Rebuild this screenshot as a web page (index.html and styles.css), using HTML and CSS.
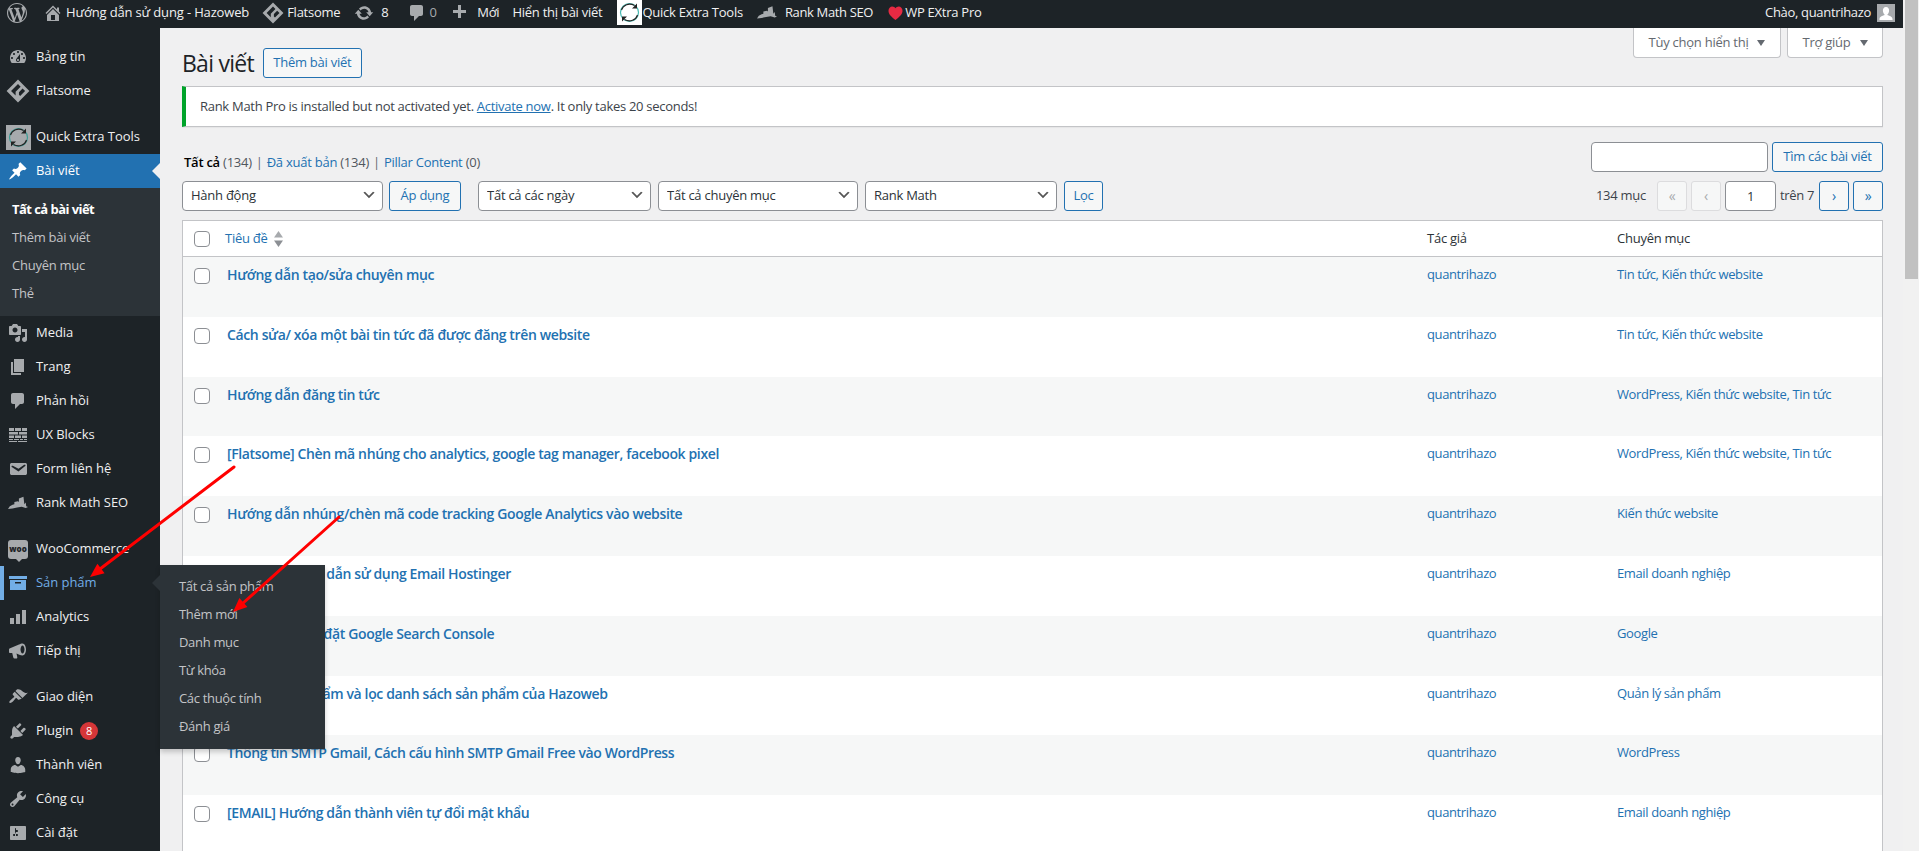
FILE: index.html
```html
<!DOCTYPE html>
<html lang="vi">
<head>
<meta charset="utf-8">
<title>Bài viết</title>
<link rel="stylesheet" href="styles.css">
</head>
<body>
<div class="viewport">
  <header class="adminbar">
    <div class="ab-left">
      <svg class="ab-wp" viewBox="0 0 20 20"><path d="M20 10c0-5.51-4.49-10-10-10C4.48 0 0 4.49 0 10c0 5.52 4.48 10 10 10 5.51 0 10-4.48 10-10zM7.78 15.37L4.37 6.22c.55-.02 1.17-.08 1.17-.08.5-.06.44-1.13-.06-1.11 0 0-1.45.11-2.37.11-.18 0-.37 0-.58-.01C4.12 2.69 6.87 1.11 10 1.11c2.33 0 4.45.87 6.05 2.34-.68-.11-1.65.39-1.65 1.58 0 .74.45 1.36.9 2.1.35.61.55 1.36.55 2.46 0 1.49-1.4 5-1.4 5l-3.03-8.37c.54-.02.82-.17.82-.17.5-.05.44-1.25-.06-1.22 0 0-1.44.12-2.38.12-.87 0-2.33-.12-2.33-.12-.5-.03-.56 1.2-.06 1.22l.92.08 1.26 3.41zM17.41 10c.24-.64.74-1.87.43-4.25.7 1.29 1.05 2.71 1.05 4.25 0 3.29-1.73 6.24-4.4 7.78.97-2.59 1.94-5.2 2.92-7.78zM6.1 18.09C3.12 16.65 1.11 13.53 1.11 10c0-1.3.23-2.48.72-3.59C3.25 10.3 4.67 14.2 6.1 18.09zm4.03-6.63l2.58 6.98c-.86.29-1.76.45-2.71.45-.79 0-1.57-.11-2.29-.33.81-2.38 1.62-4.74 2.42-7.1z"/></svg>
      <span class="ab-item ab-site"><svg class="ab-icon" viewBox="0 0 20 20"><path d="M16 8.5l1.53 1.53-1.06 1.06L10 4.62l-6.47 6.47-1.06-1.06L10 2.5l4 4v-2h2v4zm-6-2.46l6 5.99V18H4v-5.97zM12 17v-5H8v5h4z"/></svg>Hướng dẫn sử dụng - Hazoweb</span>
      <span class="ab-item ab-flatsome"><svg class="ab-icon ab-fs" viewBox="0 0 20 20"><path d="M10 .5l9.5 9.5-9.5 9.5L.5 10zM10 4.2L4.2 10 8 13.8V10.6l4.2-4.2zM13.8 8l-3 3v2.2l1 1L15.9 10z" fill-rule="evenodd"/></svg>Flatsome</span>
      <span class="ab-item ab-upd"><svg class="ab-icon" viewBox="0 0 20 20"><path d="M10.2 3.28c3.53 0 6.43 2.61 6.92 6h2.08l-3.5 4-3.5-4h2.32c-.45-1.97-2.21-3.45-4.32-3.45-1.45 0-2.73.71-3.54 1.78L4.95 5.66C6.23 4.2 8.11 3.28 10.2 3.28zm-.4 13.44c-3.52 0-6.43-2.61-6.92-6H.8l3.5-4c1.17 1.33 2.33 2.67 3.5 4H5.48c.45 1.97 2.21 3.45 4.32 3.45 1.45 0 2.73-.71 3.54-1.78l1.71 1.95c-1.28 1.46-3.15 2.38-5.25 2.38z"/></svg>8</span>
      <span class="ab-item ab-com"><svg class="ab-icon" viewBox="0 0 20 20"><path d="M5 2h9c1.1 0 2 .9 2 2v7c0 1.1-.9 2-2 2h-2l-5 5v-5H5c-1.1 0-2-.9-2-2V4c0-1.1.9-2 2-2z"/></svg><span class="ab-dim">0</span></span>
      <span class="ab-item ab-new"><svg class="ab-icon" viewBox="0 0 20 20"><path d="M17 7v3h-5v5H9v-5H4V7h5V2h3v5h5z"/></svg>Mới</span>
      <span class="ab-item ab-view">Hiển thị bài viết</span>
      <span class="ab-item ab-quick"><span class="qet-box"><svg class="qet" viewBox="0 0 25 25"><circle class="qet-ring" cx="12.5" cy="12.5" r="9"/><path class="qet-arc" d="M4.5 10C6 5 12 2.500 17.500 5.500M20.500 15C19 20 13 22.500 7.500 19.500"/><path class="qet-tip" d="M20 3.500V8.500H15zM5 21.500V16.500H10z"/></svg></span>Quick Extra Tools</span>
      <span class="ab-item ab-rank"><svg class="ab-icon ab-rm" viewBox="0 0 22 14"><path d="M0 13.500l2-3 3-1.500 2-.5V6l4-1 1 1V2l5-2 1 8.500 1.500-2 .5 4 2 1-2.500 1L15 11l-5 1-5 1z"/></svg>Rank Math SEO</span>
      <span class="ab-item ab-heart"><svg class="ab-icon" viewBox="0 0 16 15"><path d="M8 15C3 11 .5 8.500.5 5 .5 2.300 2.500.5 4.500.5 6 .5 7.300 1.300 8 2.500 8.700 1.300 10 .5 11.500.5c2 0 4 1.800 4 4.500 0 3.500-2.500 6-7.500 10z" fill="#e72a43"/></svg>WP EXtra Pro</span>
    </div>
    <div class="ab-right">Chào, quantrihazo<span class="avatar"><svg viewBox="0 0 18 18"><path d="M9 3c2.200 0 3.300 1.800 3.100 4-.2 1.900-1.300 3.300-1.900 3.900 2.600.9 5.300 1.700 5.300 4.100v1H2.500v-1c0-2.400 2.700-3.200 5.300-4.100C7.200 10.300 6.100 8.900 5.900 7 5.700 4.800 6.800 3 9 3z" fill="#fff"/></svg></span></div>
  </header>

  <div class="shell">
    <nav class="sidebar">
      <ul class="menu">
        <li class="mi"><svg class="mi-icon" viewBox="0 0 20 20"><path d="M3.76 16h12.48c1.100-1.370 1.760-3.110 1.760-5 0-4.420-3.580-8-8-8s-8 3.580-8 8c0 1.890.660 3.630 1.760 5zM10 4c.55 0 1 .45 1 1s-.45 1-1 1-1-.45-1-1 .45-1 1-1zM6 6c.55 0 1 .45 1 1s-.45 1-1 1-1-.45-1-1 .45-1 1-1zm8 0c.55 0 1 .45 1 1s-.45 1-1 1-1-.45-1-1 .45-1 1-1zm-5.370 5.550L12 7v6c0 1.100-.9 2-2 2s-2-.9-2-2c0-.57.24-1.080.63-1.450zM4 10c.55 0 1 .45 1 1s-.45 1-1 1-1-.45-1-1 .45-1 1-1zm12 0c.55 0 1 .45 1 1s-.45 1-1 1-1-.45-1-1 .45-1 1-1zm-5 3c0-.55-.45-1-1-1s-1 .45-1 1 .45 1 1 1 1-.45 1-1z"/></svg>Bảng tin</li>
        <li class="mi"><svg class="mi-icon mi-fs" viewBox="0 0 20 20"><path d="M10 .5l9.500 9.500-9.500 9.500L.5 10zM10 4.200L4.200 10 8 13.800V10.600l4.200-4.200zM13.800 8l-3 3v2.200l1 1L15.900 10z" fill-rule="evenodd"/></svg>Flatsome</li>
        <li class="sep"></li>
        <li class="mi mi-qet"><span class="qet-box qet-side"><svg class="qet" viewBox="0 0 25 25"><circle class="qet-ring" cx="12.500" cy="12.500" r="9"/><path class="qet-arc" d="M4.500 10C6 5 12 2.500 17.500 5.500M20.500 15C19 20 13 22.500 7.500 19.500"/><path class="qet-tip" d="M20 3.500V8.500H15zM5 21.500V16.500H10z"/></svg></span>Quick Extra Tools</li>
        <li class="mi mi-current"><svg class="mi-icon" viewBox="0 0 20 20"><path d="M10.440 3.020l1.820-1.820 6.360 6.350-1.830 1.820c-1.050-.68-2.480-.57-3.410.36l-.75.75c-.92.93-1.040 2.350-.35 3.410l-1.830 1.820-2.410-2.410-2.800 2.790c-.42.42-3.380 2.710-3.800 2.290s1.860-3.390 2.280-3.810l2.790-2.790L4.100 9.360l1.830-1.820c1.050.69 2.480.57 3.400-.36l.75-.75c.93-.92 1.050-2.350.36-3.410z"/></svg>Bài viết</li>
        <li>
          <ul class="submenu">
            <li class="sub-current">Tất cả bài viết</li>
            <li>Thêm bài viết</li>
            <li>Chuyên mục</li>
            <li>Thẻ</li>
          </ul>
        </li>
        <li class="mi"><svg class="mi-icon" viewBox="0 0 20 20"><path d="M13 11V4c0-.55-.45-1-1-1h-1.670L9 1H5L3.670 3H2c-.55 0-1 .45-1 1v7c0 .55.45 1 1 1h10c.55 0 1-.45 1-1zM7 4.500c1.380 0 2.500 1.120 2.500 2.500S8.380 9.500 7 9.500 4.500 8.380 4.500 7 5.620 4.500 7 4.500zM14 6h5v10.500c0 1.380-1.120 2.500-2.500 2.500S14 17.880 14 16.500s1.120-2.500 2.500-2.500c.17 0 .34.02.5.05V9h-3V6zm-4 8.050V13h2v3.500c0 1.380-1.120 2.500-2.500 2.500S7 17.880 7 16.500 8.120 14 9.500 14c.17 0 .34.02.5.05z"/></svg>Media</li>
        <li class="mi"><svg class="mi-icon" viewBox="0 0 20 20"><path d="M6 15V2h10v13H6zm-1 1h8v2H3V5h2v11z"/></svg>Trang</li>
        <li class="mi"><svg class="mi-icon" viewBox="0 0 20 20"><path d="M5 2h9c1.100 0 2 .9 2 2v7c0 1.100-.9 2-2 2h-2l-5 5v-5H5c-1.100 0-2-.9-2-2V4c0-1.100.9-2 2-2z"/></svg>Phản hồi</li>
        <li class="mi"><svg class="mi-icon" viewBox="0 0 20 20"><path d="M1 3h5v3H1zM7 3h6v3H7zM14 3h5v3h-5zM1 7h9v2.500H1zM11 7h8v2.500h-8zM1 10.500h5v2.500H1zM7 10.500h6V13H7zM14 10.500h5V13h-5zM1 14h4v1H1zM6 14h5v1H6zM12 14h3v1h-3zM16 14h3v1h-3zM1 16h8v1H1zM10 16h9v1h-9z"/></svg>UX Blocks</li>
        <li class="mi"><svg class="mi-icon" viewBox="0 0 20 20"><path d="M3.870 4h13.250C18.370 4 19 4.590 19 5.790v8.420c0 1.190-.63 1.790-1.880 1.790H3.870c-1.250 0-1.880-.6-1.880-1.790V5.790c0-1.200.63-1.790 1.880-1.790zm6.620 8.600l6.740-5.530c.24-.2.43-.66.13-1.070-.29-.41-.82-.42-1.170-.17l-5.700 3.860L4.800 6.830c-.35-.25-.88-.24-1.170.17-.3.41-.11.87.13 1.070z"/></svg>Form liên hệ</li>
        <li class="mi"><svg class="mi-icon" viewBox="0 0 22 14"><path d="M0 13.500l2-3 3-1.500 2-.5V6l4-1 1 1V2l5-2 1 8.500 1.500-2 .5 4 2 1-2.500 1L15 11l-5 1-5 1z"/></svg>Rank Math SEO</li>
        <li class="sep"></li>
        <li class="mi"><span class="woo"><span class="woo-text">woo</span></span>WooCommerce</li>
        <li class="mi mi-open">
          <svg class="mi-icon" viewBox="0 0 20 20"><path d="M1 3h18v3H1zM2 7h16v10H2zM7 9v1.500h6V9z" fill-rule="evenodd"/></svg>Sản phẩm
          <ul class="flyout">
            <li>Tất cả sản phẩm</li>
            <li>Thêm mới</li>
            <li>Danh mục</li>
            <li>Từ khóa</li>
            <li>Các thuộc tính</li>
            <li>Đánh giá</li>
          </ul>
        </li>
        <li class="mi"><svg class="mi-icon" viewBox="0 0 20 20"><path d="M2 11h4v6H2zM8 7h4v10H8zM14 3h4v14h-4z"/></svg>Analytics</li>
        <li class="mi"><svg class="mi-icon" viewBox="0 0 20 20"><path d="M1.500 7.500L11 3.500c1-.4 2.500-1 3.500-1 2 0 3.500 2.800 3.500 6s-1.500 6-3.500 6c-.9 0-2.200-.4-3.200-.8L8.500 12.500l.8 3.700c.1.700-.3 1.300-1 1.300H6.500c-.6 0-1-.3-1.200-.9L4.200 12 2 12c-.6 0-1-.5-1-1V8.500c0-.4.2-.8.500-1zM14.500 4.500c-1 0-2 1.800-2 4s1 4 2 4 2-1.800 2-4-1-4-2-4z" fill-rule="evenodd"/></svg>Tiếp thị</li>
        <li class="sep"></li>
        <li class="mi"><svg class="mi-icon" viewBox="0 0 20 20"><path d="M14.480 11.060L7.410 3.990l1.500-1.500c.5-.56 2.300-.47 3.510.32 1.210.8 1.430 1.280 2.910 2.100 1.180.64 2.450 1.260 4.450.85zm-.71.71L6.700 4.700 4.930 6.470c-.39.39-.39 1.020 0 1.410l1.060 1.060c.39.39.39 1.030 0 1.420-.6.6-1.430 1.110-2.210 1.690-.35.26-.7.53-1.010.84C1.430 13.710.96 15.120 1.540 15.780c.69.61 2.090.14 3.400-1.180.31-.31.58-.66.85-1.010.57-.78 1.080-1.610 1.690-2.210.39-.39 1.020-.39 1.410 0l1.060 1.060c.39.39 1.020.39 1.410 0z"/></svg>Giao diện</li>
        <li class="mi"><svg class="mi-icon" viewBox="0 0 20 20"><path d="M13.110 4.360L9.870 7.600 8 5.730l3.240-3.240c.35-.34 1.050-.2 1.560.32.52.51.66 1.210.31 1.550zm-8 1.770l.91-1.120 9.010 9.010-1.190.84c-.71.71-2.630 1.160-3.820 1.160H6.140L4.900 17.260c-.59.59-1.540.59-2.120 0-.59-.58-.59-1.530 0-2.120l1.240-1.240v-3.880c0-1.130.4-3.190 1.090-3.890zm7.260 3.970l3.240-3.240c.34-.35 1.040-.21 1.550.31.52.51.66 1.210.31 1.550l-3.240 3.250z"/></svg>Plugin<span class="badge">8</span></li>
        <li class="mi"><svg class="mi-icon" viewBox="0 0 20 20"><path d="M10 9.250c-2.270 0-2.730-3.440-2.730-3.440C7 4.020 7.820 2 9.970 2c2.160 0 2.980 2.020 2.710 3.810 0 0-.41 3.440-2.680 3.440zm0 2.570L12.720 10c2.390 0 4.520 2.330 4.520 4.530v2.490s-3.650 1.130-7.240 1.130c-3.650 0-7.240-1.130-7.240-1.130v-2.490c0-2.250 1.940-4.480 4.470-4.480z"/></svg>Thành viên</li>
        <li class="mi"><svg class="mi-icon" viewBox="0 0 20 20"><path d="M16.680 9.770c-1.340 1.340-3.300 1.670-4.950.99l-5.410 6.520c-.99.99-2.590.99-3.580 0s-.99-2.590 0-3.570l6.520-5.420c-.68-1.650-.35-3.610.99-4.950 1.280-1.280 3.120-1.620 4.720-1.060l-2.890 2.890 2.820 2.820 2.860-2.870c.53 1.580.18 3.390-1.080 4.650zM3.810 16.210c.4.39 1.040.39 1.430 0 .4-.4.4-1.040 0-1.430-.39-.4-1.030-.4-1.430 0-.39.39-.39 1.030 0 1.430z"/></svg>Công cụ</li>
        <li class="mi"><svg class="mi-icon" viewBox="0 0 20 20"><path d="M18 16V4c0-.55-.45-1-1-1H3c-.55 0-1 .45-1 1v12c0 .55.45 1 1 1h14c.55 0 1-.45 1-1zM8 11h1c.55 0 1 .45 1 1s-.45 1-1 1H8v1.500c0 .28-.22.5-.5.5s-.5-.22-.5-.5V13H6c-.55 0-1-.45-1-1s.45-1 1-1h1V5.500c0-.28.22-.5.5-.5s.5.22.5.5V7h1c.55 0 1 .45 1 1s-.45 1-1 1h-1v5.500c0 .28-.22.5-.5.5s-.5-.22-.5-.5V9z"/></svg>Cài đặt</li>
      </ul>
    </nav>

    <main class="main">
      <div class="meta-links">
        <button class="meta-tab meta-options">Tùy chọn hiển thị<span class="caret"></span></button>
        <button class="meta-tab meta-help">Trợ giúp<span class="caret"></span></button>
      </div>
      <div class="title-row">
        <h1 class="page-title">Bài viết</h1>
        <a class="btn btn-add">Thêm bài viết</a>
      </div>
      <div class="notice">Rank Math Pro is installed but not activated yet. <a class="notice-link">Activate now</a>. It only takes 20 seconds!</div>

      <div class="views-row">
        <ul class="views">
          <li><b>Tất cả</b> <span class="count">(134)</span></li>
          <li class="bar">|</li>
          <li><a>Đã xuất bản</a> <span class="count">(134)</span></li>
          <li class="bar">|</li>
          <li><a>Pillar Content</a> <span class="count">(0)</span></li>
        </ul>
        <div class="search">
          <input class="search-input" type="text" aria-label="Tìm">
          <a class="btn btn-search">Tìm các bài viết</a>
        </div>
      </div>

      <div class="filter-row">
        <select class="sel sel-action"><option>Hành động</option></select>
        <a class="btn btn-apply">Áp dụng</a>
        <select class="sel sel-date"><option>Tất cả các ngày</option></select>
        <select class="sel sel-cat"><option>Tất cả chuyên mục</option></select>
        <select class="sel sel-rank"><option>Rank Math</option></select>
        <a class="btn btn-filter">Lọc</a>
        <div class="pager">
          <span class="pager-count">134 mục</span>
          <span class="pg pg-off pg-first">«</span>
          <span class="pg pg-off">‹</span>
          <input class="pg-input" type="text" value="1" aria-label="Trang">
          <span class="pg-total">trên 7</span>
          <a class="pg pg-next">›</a>
          <a class="pg">»</a>
        </div>
      </div>

      <table class="posts">
        <colgroup><col class="c-check"><col class="c-title"><col class="c-author"><col class="c-cat"></colgroup>
        <thead>
          <tr>
            <th class="cell-check"><span class="check"></span></th>
            <th><a class="sort">Tiêu đề<svg class="sort-icon" viewBox="0 0 9 16"><path d="M4.500 0L9 6.500H0z" fill="#a7aaad"/><path d="M4.500 16L0 9.500h9z" fill="#8c8f94"/></svg></a></th>
            <th>Tác giả</th>
            <th>Chuyên mục</th>
          </tr>
        </thead>
        <tbody>
          <tr><td class="cell-check"><span class="check"></span></td><td><a class="post-title">Hướng dẫn tạo/sửa chuyên mục</a></td><td><a>quantrihazo</a></td><td><a>Tin tức, Kiến thức website</a></td></tr>
          <tr><td class="cell-check"><span class="check"></span></td><td><a class="post-title">Cách sửa/ xóa một bài tin tức đã được đăng trên website</a></td><td><a>quantrihazo</a></td><td><a>Tin tức, Kiến thức website</a></td></tr>
          <tr><td class="cell-check"><span class="check"></span></td><td><a class="post-title">Hướng dẫn đăng tin tức</a></td><td><a>quantrihazo</a></td><td><a>WordPress, Kiến thức website, Tin tức</a></td></tr>
          <tr><td class="cell-check"><span class="check"></span></td><td><a class="post-title">[Flatsome] Chèn mã nhúng cho analytics, google tag manager, facebook pixel</a></td><td><a>quantrihazo</a></td><td><a>WordPress, Kiến thức website, Tin tức</a></td></tr>
          <tr><td class="cell-check"><span class="check"></span></td><td><a class="post-title">Hướng dẫn nhúng/chèn mã code tracking Google Analytics vào website</a></td><td><a>quantrihazo</a></td><td><a>Kiến thức website</a></td></tr>
          <tr><td class="cell-check"><span class="check"></span></td><td><a class="post-title">[EMAIL] Hướng dẫn sử dụng Email Hostinger</a></td><td><a>quantrihazo</a></td><td><a>Email doanh nghiệp</a></td></tr>
          <tr><td class="cell-check"><span class="check"></span></td><td><a class="post-title">Hướng dẫn cài đặt Google Search Console</a></td><td><a>quantrihazo</a></td><td><a>Google</a></td></tr>
          <tr><td class="cell-check"><span class="check"></span></td><td><a class="post-title">Quản lý sản phẩm và lọc danh sách sản phẩm của Hazoweb</a></td><td><a>quantrihazo</a></td><td><a>Quản lý sản phẩm</a></td></tr>
          <tr><td class="cell-check"><span class="check"></span></td><td><a class="post-title">Thông tin SMTP Gmail, Cách cấu hình SMTP Gmail Free vào WordPress</a></td><td><a>quantrihazo</a></td><td><a>WordPress</a></td></tr>
          <tr><td class="cell-check"><span class="check"></span></td><td><a class="post-title">[EMAIL] Hướng dẫn thành viên tự đổi mật khẩu</a></td><td><a>quantrihazo</a></td><td><a>Email doanh nghiệp</a></td></tr>
        </tbody>
      </table>
    </main>
  </div>
</div>
<div class="scrollbar"><div class="thumb"></div></div>

<svg class="annotations" viewBox="0 0 1919 851" aria-hidden="true">
  <path class="arrow-line" d="M234 467L100 569"/>
  <path class="arrow-head" d="M90 577L97.400 563.700 104.600 573.300z"/>
  <path class="arrow-line" d="M339 517L242 604"/>
  <path class="arrow-head" d="M233 612L239.400 598.100 247.400 607.100z"/>
</svg>
</body>
</html>
```

FILE: styles.css
```css
* { box-sizing: border-box; }
html, body { margin: 0; height: 851px; overflow: hidden; }
body {
  display: flex;
  background: #f0f0f1;
  color: #3c434a;
  font: 13px/19.5px "Open Sans", "Noto Sans", sans-serif;
  letter-spacing: -0.25px;
}
ul { list-style: none; margin: 0; padding: 0; }
a { color: #2271b1; text-decoration: none; }
select, input, button { font: inherit; letter-spacing: inherit; }

.viewport { width: 1903px; flex: none; display: flex; flex-direction: column; height: 851px; overflow: hidden; }
.scrollbar { flex: 1; background: #f1f1f1; padding: 0 1px 0 2px; }
.thumb { height: 279px; background: #c1c1c1; }

/* admin bar */
.adminbar { height: 28px; flex: none; background: #1d2327; color: #f0f0f1; display: flex; justify-content: space-between; line-height: 25px; padding-bottom: 3px; }
.ab-left { display: flex; align-items: center; height: 25px; }
.ab-wp { width: 20px; height: 20px; fill: #a7aaad; margin: 0 0 0 7px; }
.ab-item { display: flex; align-items: center; height: 25px; white-space: nowrap; }
.ab-icon { width: 20px; height: 20px; fill: #a7aaad; flex: none; }
.ab-site { margin-left: 16px; letter-spacing: -0.15px; }
.ab-site .ab-icon { margin-right: 3px; }
.ab-flatsome { margin-left: 13px; }
.ab-fs { margin-right: 3px; width: 22px; height: 22px; }
.ab-upd { margin-left: 14px; }
.ab-upd .ab-icon { margin-right: 7px; }
.ab-com { margin-left: 18px; }
.ab-com .ab-icon { margin-right: 3px; }
.ab-dim { color: #a7aaad; }
.ab-new { margin-left: 12.5px; }
.ab-new .ab-icon { margin-right: 8px; }
.ab-view { margin-left: 13px; }
.ab-quick { margin-left: 15px; }
.qet-box { display: block; width: 25px; height: 25px; background: #fff; flex: none; }
.qet { display: block; width: 25px; height: 25px; }
.qet-ring { fill: none; stroke: #46b8b0; stroke-width: 1.2; }
.qet-arc { fill: none; stroke: #222; stroke-width: 1.1; }
.qet-tip { fill: #222; }
.ab-rank { margin-left: 14px; letter-spacing: -0.35px; }
.ab-rm { margin-right: 8px; height: 13px; }
.ab-heart { margin-left: 15px; }
.ab-heart .ab-icon { width: 15px; height: 14px; margin-right: 2px; }
.ab-right { display: flex; align-items: center; height: 25px; padding-right: 8px; letter-spacing: -0.32px; }
.avatar { width: 18px; height: 18px; margin-left: 6px; background: #a7aaad; display: block; }
.avatar svg { display: block; width: 18px; height: 18px; }

/* layout */
.shell { flex: 1; display: flex; min-height: 0; }
.sidebar { width: 160px; flex: none; background: #1d2327; padding-top: 12px; color: #f0f0f1; position: relative; z-index: 2; letter-spacing: -0.05px; }

/* menu */
.mi { height: 34px; display: flex; align-items: center; position: relative; white-space: nowrap; }
.mi-icon { width: 20px; height: 20px; margin: 0 8px 0 8px; fill: #a7aaad; flex: none; }
.mi-fs { width: 24px; height: 24px; margin: 0 6px 0 6px; }
.sep { height: 12px; }
.mi-qet .qet-box { margin: 0 5px 0 6px; }
.qet-side { background: #a7aaad; }
.qet-side .qet-ring { stroke: #3d9c96; }
.mi-current { background: #2271b1; color: #fff; }
.mi-current .mi-icon { fill: #fff; }
.mi-current::after {
  content: ""; position: absolute; right: 0; top: 50%; margin-top: -8px;
  border: 8px solid transparent; border-left-width: 0; border-right-color: #f0f0f1;
}
.submenu { background: #2c3338; padding: 7px 0 9px; color: #c3c4c7; letter-spacing: -0.25px; }
.submenu li { height: 28px; line-height: 28px; padding-left: 12px; }
.submenu .sub-current { color: #fff; font-weight: 700; letter-spacing: -0.55px; }
.woo { width: 20px; height: 19px; margin: 0 8px; background: #a7aaad; border-radius: 3px; display: flex; align-items: center; justify-content: center; flex: none; position: relative; }
.woo::after { content: ""; position: absolute; left: 8px; bottom: -3px; border: 3px solid transparent; border-bottom-width: 0; border-top-color: #a7aaad; }
.woo-text { font-size: 8px; line-height: 10px; font-weight: 800; color: #1d2327; letter-spacing: 0; }
.mi-open { color: #72aee6; box-shadow: inset 4px 0 0 #72aee6; }
.mi-open .mi-icon { fill: #72aee6; }
.mi-open::after {
  content: ""; position: absolute; right: 0; top: 50%; margin-top: -8px;
  border: 8px solid transparent; border-left-width: 0; border-right-color: #2c3338;
}
.flyout {
  position: absolute; left: 160px; top: -1px; width: 165px;
  background: #2c3338; padding: 7px 0 9px; color: #c3c4c7; letter-spacing: -0.32px;
  box-shadow: 0 3px 5px rgba(0, 0, 0, .2);
}
.flyout li { height: 28px; line-height: 28px; padding-left: 19px; }
.badge { display: inline-block; width: 18px; height: 18px; margin-left: 7px; border-radius: 9px; background: #d63638; color: #fff; font-size: 11px; line-height: 18px; text-align: center; letter-spacing: 0; }

/* main */
.main { flex: 1; min-width: 0; padding: 0 20px 0 22px; overflow: hidden; }
.meta-links { float: right; display: flex; gap: 6px; }
.meta-tab { height: 30px; background: #fff; border: 1px solid #c3c4c7; border-top: 0; border-radius: 0 0 4px 4px; color: #646970; padding: 0; display: flex; align-items: center; justify-content: center; }
.meta-options { width: 148px; }
.meta-help { width: 96px; }
.caret { margin-left: 9px; border: 5px solid transparent; border-bottom-width: 0; border-top: 6px solid #646970; border-left-width: 4px; border-right-width: 4px; }
.title-row { padding-top: 20px; display: flex; align-items: center; height: 50px; }
.page-title { margin: 0; font-size: 23px; line-height: 30px; font-weight: 400; color: #1d2327; letter-spacing: -0.75px; }
.btn { height: 30px; display: inline-flex; align-items: center; justify-content: center; border: 1px solid #2271b1; border-radius: 3px; background: #f6f7f7; color: #2271b1; flex: none; }
.btn-add { width: 99px; margin-left: 9px; }
.notice { margin-top: 8px; height: 41px; background: #fff; border: 1px solid #c3c4c7; border-left: 4px solid #00a32a; padding: 10px 14px; box-shadow: 0 1px 1px rgba(0, 0, 0, .04); letter-spacing: -0.29px; }
.notice-link { text-decoration: underline; }
.views-row { margin-top: 15px; display: flex; justify-content: space-between; align-items: flex-end; height: 30px; }
.views { display: flex; gap: 5px; padding: 0 0 0 2px; line-height: 19px; margin-bottom: 0; position: relative; top: -0.5px; color: #50575e; }
.views b { color: #000; font-weight: 600; }
.views .bar { color: #646970; margin: 0 -1px; }
.search { display: flex; gap: 4px; }
.search-input { width: 177px; height: 30px; border: 1px solid #8c8f94; border-radius: 4px; background: #fff; padding: 0 8px; }
.btn-search { width: 111px; }
.filter-row { margin-top: 9px; height: 30px; display: flex; align-items: center; }
.sel {
  height: 30px; appearance: none; -webkit-appearance: none; border: 1px solid #8c8f94; border-radius: 4px;
  padding: 0 24px 0 8px; color: #2c3338; flex: none;
  background: #fff url("data:image/svg+xml,%3Csvg xmlns='http://www.w3.org/2000/svg' width='20' height='20'%3E%3Cpath d='M5 6l5 5 5-5 2 1-7 7-7-7z' fill='%23555'/%3E%3C/svg%3E") no-repeat right 5px top 5px / 16px 16px;
}
.sel-action { width: 201px; }
.btn-apply { width: 72px; margin-left: 6px; }
.sel-date { width: 173px; margin-left: 17px; }
.sel-cat { width: 200px; margin-left: 7px; }
.sel-rank { width: 192px; margin-left: 7px; }
.btn-filter { width: 39px; margin-left: 7px; }
.pager { margin-left: auto; display: flex; align-items: center; }
.pager-count { margin-right: 11px; }
.pg { width: 30px; height: 30px; display: flex; align-items: center; justify-content: center; border: 1px solid #2271b1; border-radius: 3px; background: #f6f7f7; color: #2271b1; margin-left: 4px; font-size: 14px; }
.pg-off { color: #a7aaad; border-color: #dcdcde; }
.pg-first { margin-left: 0; }
.pg-input { width: 51px; height: 30px; margin-left: 4px; border: 1px solid #8c8f94; border-radius: 4px; background: #fff; text-align: center; color: #2c3338; padding: 0; }
.pg-total { margin: 0 1px 0 4px; letter-spacing: -0.35px; }
.pg-next { margin-left: 4px; }

/* table */
.posts { margin-top: 9px; width: 100%; border-collapse: separate; border-spacing: 0; table-layout: fixed; background: #fff; border: 1px solid #c3c4c7; }
.c-check { width: 34px; }
.c-author { width: 190px; }
.c-cat { width: 273px; }
.posts th { height: 36px; padding: 8px; text-align: left; font-weight: 400; color: #2c3338; border-bottom: 1px solid #c3c4c7; line-height: 19px; vertical-align: middle; }
.posts td { padding: 8px; vertical-align: top; height: 59.8px; letter-spacing: -0.38px; }
.posts tbody tr:nth-child(odd) { background: #f6f7f7; }
.sort { display: inline-flex; align-items: center; }
.sort-icon { width: 9px; height: 16px; margin-left: 6px; }
.posts .cell-check { padding: 11px 0 0 11px; vertical-align: top; }
.posts th.cell-check { padding-top: 10px; }
.check { display: block; width: 16px; height: 16px; background: #fff; border: 1px solid #8c8f94; border-radius: 4px; }
.post-title { font-size: 14px; font-weight: 600; margin-left: 2px; letter-spacing: -0.37px; }

/* annotations */
.annotations { position: absolute; left: 0; top: 0; width: 1919px; height: 851px; z-index: 5; pointer-events: none; }
.arrow-line { stroke: #f00; stroke-width: 3; fill: none; stroke-linecap: round; }
.arrow-head { fill: #f00; }
```
